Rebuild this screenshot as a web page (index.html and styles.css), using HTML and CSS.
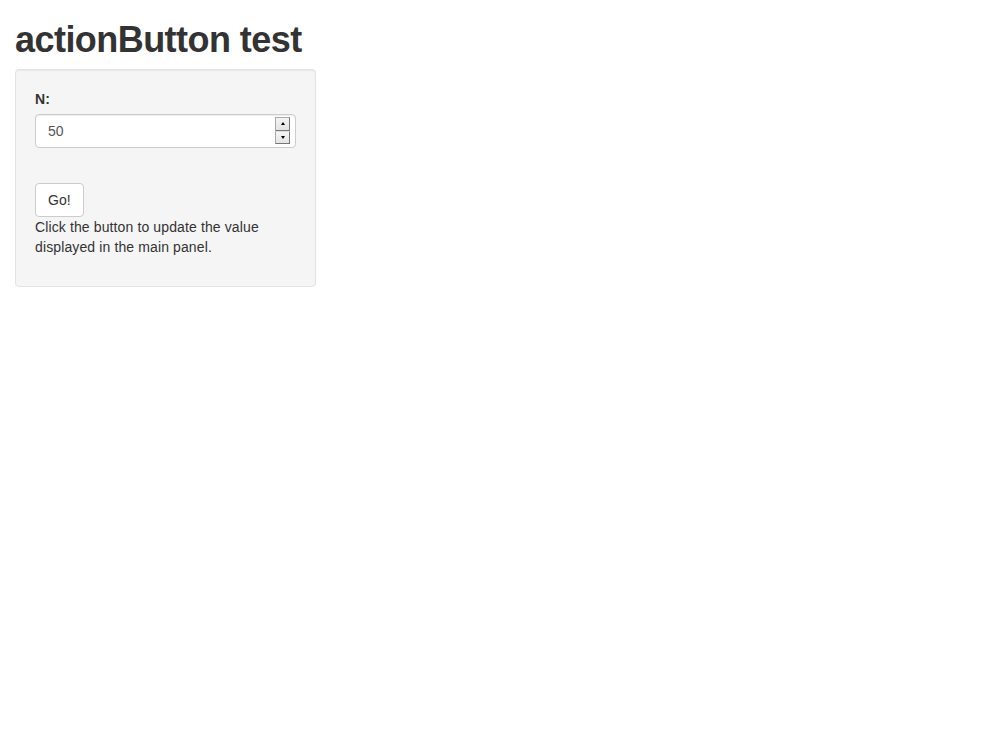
FILE: index.html
```html
<!DOCTYPE html>
<html>
<head>
<meta charset="utf-8">
<title>actionButton test</title>
<link rel="stylesheet" href="styles.css">
</head>
<body>
<div class="container">
  <h2 class="title">actionButton test</h2>
  <div class="well">
    <div class="form-group">
      <label class="label" for="n">N:</label>
      <div class="input-wrap">
        <input class="form-control" id="n" type="text" value="50">
        <div class="spinner">
          <span class="spin-btn"><svg width="4" height="3" viewBox="0 0 4 3"><path d="M2 0L4 3H0Z" fill="#000"/></svg></span>
          <span class="spin-btn"><svg width="4" height="3" viewBox="0 0 4 3"><path d="M0 0H4L2 3Z" fill="#000"/></svg></span>
        </div>
      </div>
    </div>
    <div class="spacer"></div>
    <button class="btn" type="button">Go!</button>
    <p class="help">Click the button to update the value displayed in the main panel.</p>
  </div>
</div>
</body>
</html>
```

FILE: styles.css
```css
* { box-sizing: border-box; }
html, body { margin: 0; padding: 0; background: #fff; }
body {
  font-family: "Liberation Sans", Arial, Helvetica, sans-serif;
  font-size: 14px;
  line-height: 20px;
  color: #333;
  letter-spacing: 0.12px;
}
.container { padding: 0 15px; }
.title {
  font-size: 36px;
  line-height: 39px;
  font-weight: bold;
  margin: 20px 0 10px;
  color: #333;
  letter-spacing: -0.55px;
}
.well {
  width: 301px;
  padding: 19px;
  background: #f5f5f5;
  border: 1px solid #e3e3e3;
  border-radius: 4px;
  box-shadow: inset 0 1px 1px rgba(0,0,0,0.05);
}
.form-group { margin-bottom: 15px; }
.label {
  display: block;
  font-weight: bold;
  margin-bottom: 5px;
  height: 20px;
}
.input-wrap { position: relative; }
.form-control {
  display: block;
  width: 100%;
  height: 34px;
  padding: 6px 12px;
  font-family: inherit;
  font-size: 14px;
  line-height: 20px;
  color: #555;
  background: #fff;
  border: 1px solid #ccc;
  border-radius: 4px;
  box-shadow: inset 0 1px 1px rgba(0,0,0,0.075);
  outline: none;
}
.spinner {
  position: absolute;
  right: 6px;
  top: 3px;
  width: 15px;
  height: 27px;
  display: flex;
  flex-direction: column;
}
.spin-btn {
  flex: 1;
  display: flex;
  align-items: center;
  justify-content: center;
  background: linear-gradient(#f4f4f4, #e4e4e4);
  border: 1px solid #aaa;
  border-right-color: #777;
  border-bottom-color: #777;
}
.spin-btn + .spin-btn { border-top: 1px solid #ddd; }
.spacer { height: 20px; }
.btn {
  display: block;
  height: 34px;
  padding: 6px 12px;
  font-family: inherit;
  font-size: 14px;
  line-height: 20px;
  color: #333;
  background: #fff;
  border: 1px solid #ccc;
  border-radius: 4px;
  cursor: pointer;
  letter-spacing: 0;
}
.help { margin: 0 0 10px; }
```
